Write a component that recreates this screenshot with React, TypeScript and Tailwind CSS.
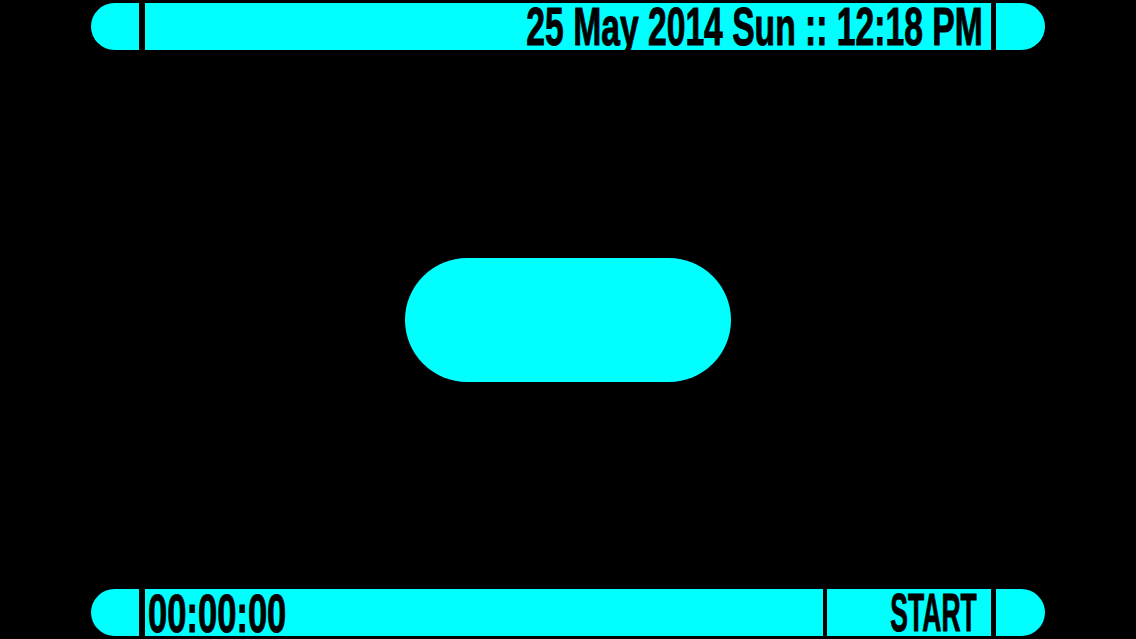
const cyan = "bg-[#00ffff]"

const labelFont = {
  fontFamily: '"Liberation Sans", Arial, sans-serif',
}

const BarCap = ({ side }: { side: "left" | "right" }) => (
  <div
    className={`${cyan} h-full shrink-0 ${
      side === "left" ? "w-[48px] rounded-l-full" : "w-[49px] rounded-r-full"
    }`}
  />
)

const TopBar = () => (
  <div className="ml-[91px] mt-[3px] flex h-[47px] w-[954px]">
    <BarCap side="left" />
    <div className={`${cyan} ml-[6px] flex min-w-0 flex-1 items-start justify-end pr-[8px] pt-px`}>
      <span
        className="origin-right scale-x-[0.635] whitespace-nowrap text-[53px] font-bold leading-[46px] text-black [-webkit-text-stroke:1px_black]"
        style={labelFont}
      >
        25 May 2014 Sun :: 12:18 PM
      </span>
    </div>
    <div className="ml-[5px] flex">
      <BarCap side="right" />
    </div>
  </div>
)

const BottomBar = () => (
  <div className="mb-[3px] ml-[91px] flex h-[47px] w-[954px]">
    <BarCap side="left" />
    {/* elapsed timer */}
    <div className={`${cyan} ml-[6px] flex w-[678px] shrink-0 items-start pl-[3px] pt-[1px]`}>
      <span
        className="origin-left scale-x-[0.64] whitespace-nowrap text-[54px] font-bold leading-[46px] text-black [-webkit-text-stroke:1px_black]"
        style={labelFont}
      >
        00:00:00
      </span>
    </div>
    {/* start button */}
    <div className={`${cyan} ml-[4px] flex min-w-0 flex-1 items-start justify-end pr-[14px] pt-[1px]`}>
      <span
        className="origin-right scale-x-[0.5] whitespace-nowrap text-[53px] font-bold leading-[46px] text-black [-webkit-text-stroke:1px_black]"
        style={labelFont}
      >
        START
      </span>
    </div>
    <div className="ml-[5px] flex">
      <BarCap side="right" />
    </div>
  </div>
)

export default function App() {
  return (
    <div className="flex h-[639px] w-[1136px] flex-col overflow-hidden bg-black">
      <TopBar />
      <div className="flex flex-1 items-center justify-center">
        <div className={`${cyan} mt-[1px] h-[124px] w-[326px] rounded-full`} />
      </div>
      <BottomBar />
    </div>
  )
}
